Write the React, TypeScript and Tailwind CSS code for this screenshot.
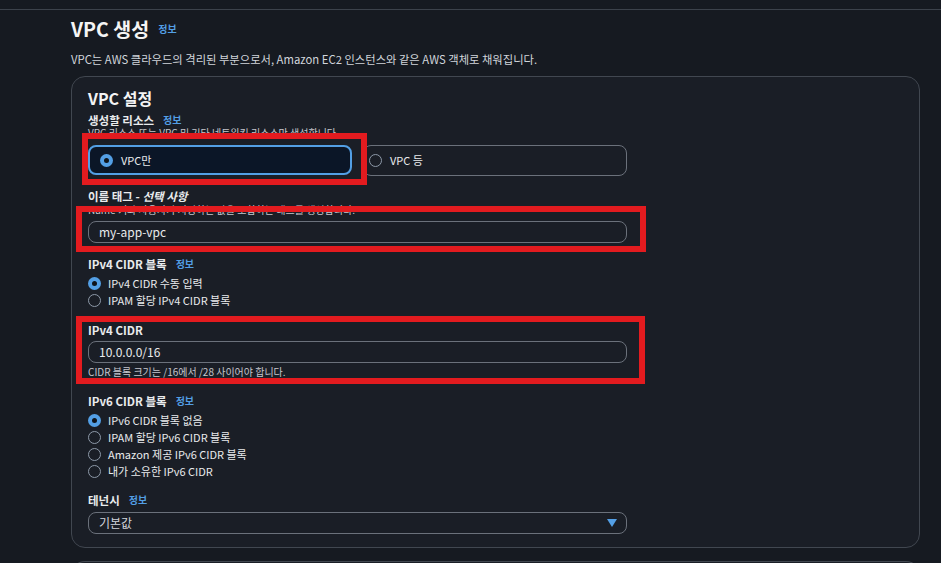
import React from 'react';

const Info = () => <span className="ml-[9px] text-[10px] font-bold text-[#539fe5]">정보</span>;

function Radio({ checked }: { checked?: boolean }) {
    return checked ? (
        <span className="flex h-[13px] w-[13px] shrink-0 items-center justify-center rounded-full bg-[#539fe5]">
            <span className="h-[5px] w-[5px] rounded-full bg-[#0f141a]" />
        </span>
    ) : (
        <span className="h-[13px] w-[13px] shrink-0 rounded-full border-[1.5px] border-[#8d99a8]" />
    );
}

function RadioRow({ label, checked }: { label: string; checked?: boolean }) {
    return (
        <div className="flex h-[17px] items-center gap-[7px] text-[11px] text-[#e9ebed]">
            <Radio checked={checked} />
            <span>{label}</span>
        </div>
    );
}

const Label = ({ children }: { children: React.ReactNode }) => (
    <div className="flex h-[16px] items-center text-[11.5px] font-bold text-[#e9ebed]">{children}</div>
);

const Field = ({ children }: { children: React.ReactNode }) => (
    <div className="flex h-[22px] items-center rounded-[8px] border border-[#6b717b] px-[10px] text-[12px] text-[#e9ebed]">
        {children}
    </div>
);

const RedBox = ({ className }: { className: string }) => (
    <div className={`pointer-events-none absolute border-[6px] border-[#e31b1f] ${className}`} />
);

export default function App() {
    return (
        <div className="min-h-[563px] overflow-hidden bg-[#161a21] leading-none [font-family:'Noto_Sans_CJK_KR','Open_Sans',sans-serif]">
            <div className="h-[10px] border-b border-[#3c424b]" />
            <div className="pl-[71px] pr-[21px]">
                <div className="flex h-[26px] items-center pt-[11px]">
                    <h1 className="text-[19.5px] font-bold text-[#f4f4f4]">VPC 생성</h1>
                    <Info />
                </div>
                <p className="mt-[18px] text-[11.3px] text-[#d1d5db]">
                    VPC는 AWS 클라우드의 격리된 부분으로서, Amazon EC2 인스턴스와 같은 AWS 객체로 채워집니다.
                </p>

                <div className="relative mt-[11px] rounded-[14px] border border-[#414750] bg-[#1a1e26] pb-[13px] pl-[16px] pt-[11px]">
                    <div className="w-[539px]">
                        <div className="flex h-[20px] items-center text-[16px] font-bold text-[#f4f4f4]">VPC 설정</div>

                        <div className="mt-[4px]">
                            <Label>
                                생성할 리소스 <Info />
                            </Label>
                        </div>
                        <div className="h-[10px] text-[10px] text-[#c6c6cd]">
                            VPC 리소스 또는 VPC 및 기타 네트워킹 리소스만 생성합니다.
                        </div>
                        <div className="mt-[7px] grid grid-cols-2 gap-[11px]">
                            <div className="flex h-[30px] items-center gap-[8px] rounded-[8px] border-2 border-[#539fe5] bg-[#0b1627] px-[10px] text-[11px] text-[#e9ebed]">
                                <Radio checked />
                                <span>VPC만</span>
                            </div>
                            <div className="flex h-[31px] items-center gap-[8px] rounded-[8px] border border-[#6b717b] px-[5px] text-[11px] text-[#e9ebed]">
                                <Radio />
                                <span>VPC 등</span>
                            </div>
                        </div>

                        <div className="mt-[12px]">
                            <Label>
                                이름 태그 -&nbsp;<i>선택 사항</i>
                            </Label>
                        </div>
                        <div className="mt-[1px] h-[10px] text-[10px] text-[#c6c6cd]">
                            Name 키와 사용자가 지정하는 값을 포함하는 태그를 생성합니다.
                        </div>
                        <div className="mt-[6px]">
                            <Field>my-app-vpc</Field>
                        </div>

                        <div className="mt-[13px]">
                            <Label>
                                IPv4 CIDR 블록 <Info />
                            </Label>
                        </div>
                        <div className="mt-[3px]">
                            <RadioRow label="IPv4 CIDR 수동 입력" checked />
                            <RadioRow label="IPAM 할당 IPv4 CIDR 블록" />
                        </div>

                        <div className="mt-[13px]">
                            <Label>IPv4 CIDR</Label>
                        </div>
                        <div className="mt-[3px]">
                            <Field>10.0.0.0/16</Field>
                        </div>
                        <div className="mt-[4px] h-[10px] text-[10px] text-[#c6c6cd]">
                            CIDR 블록 크기는 /16에서 /28 사이어야 합니다.
                        </div>

                        <div className="mt-[16px]">
                            <Label>
                                IPv6 CIDR 블록 <Info />
                            </Label>
                        </div>
                        <div className="mt-[3px]">
                            <RadioRow label="IPv6 CIDR 블록 없음" checked />
                            <RadioRow label="IPAM 할당 IPv6 CIDR 블록" />
                            <RadioRow label="Amazon 제공 IPv6 CIDR 블록" />
                            <RadioRow label="내가 소유한 IPv6 CIDR" />
                        </div>

                        <div className="mt-[12px]">
                            <Label>
                                테넌시 <Info />
                            </Label>
                        </div>
                        <div className="mt-[4px]">
                            <div className="flex h-[22px] items-center justify-between rounded-[8px] border border-[#6b717b] pl-[10px] pr-[9px] text-[12px] text-[#d1d5db]">
                                <span>기본값</span>
                                <svg width="10" height="8" viewBox="0 0 10 8">
                                    <path d="M0 0h10L5 8z" fill="#539fe5" />
                                </svg>
                            </div>
                        </div>
                    </div>

                    <RedBox className="left-[10px] top-[56px] h-[52px] w-[285px]" />
                    <RedBox className="left-[4px] top-[129px] h-[46px] w-[570px]" />
                    <RedBox className="left-[4px] top-[239px] h-[68px] w-[569px]" />
                </div>

                <div className="mt-[13px] h-[20px] rounded-t-[14px] border border-b-0 border-[#414750] bg-[#1a1e26]" />
            </div>
        </div>
    );
}
